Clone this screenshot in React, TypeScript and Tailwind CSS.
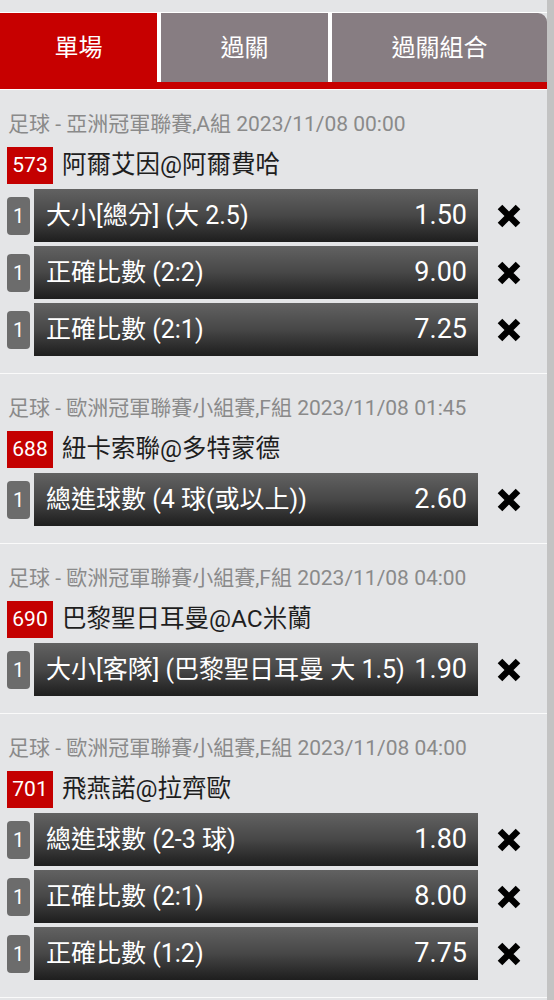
import React from "react";

type Bet = { label: string; odds: string };
type Match = { header: string; code: string; teams: string; bets: Bet[] };

const matches: Match[] = [
  {
    header: "足球 - 亞洲冠軍聯賽,A組 2023/11/08 00:00",
    code: "573",
    teams: "阿爾艾因@阿爾費哈",
    bets: [
      { label: "大小[總分] (大 2.5)", odds: "1.50" },
      { label: "正確比數 (2:2)", odds: "9.00" },
      { label: "正確比數 (2:1)", odds: "7.25" },
    ],
  },
  {
    header: "足球 - 歐洲冠軍聯賽小組賽,F組 2023/11/08 01:45",
    code: "688",
    teams: "紐卡索聯@多特蒙德",
    bets: [{ label: "總進球數 (4 球(或以上))", odds: "2.60" }],
  },
  {
    header: "足球 - 歐洲冠軍聯賽小組賽,F組 2023/11/08 04:00",
    code: "690",
    teams: "巴黎聖日耳曼@AC米蘭",
    bets: [{ label: "大小[客隊] (巴黎聖日耳曼 大 1.5)", odds: "1.90" }],
  },
  {
    header: "足球 - 歐洲冠軍聯賽小組賽,E組 2023/11/08 04:00",
    code: "701",
    teams: "飛燕諾@拉齊歐",
    bets: [
      { label: "總進球數 (2-3 球)", odds: "1.80" },
      { label: "正確比數 (2:1)", odds: "8.00" },
      { label: "正確比數 (1:2)", odds: "7.75" },
    ],
  },
];

const font = { fontFamily: 'Roboto, "Noto Sans CJK TC", sans-serif' };

function XIcon() {
  return (
    <svg width="26" height="24" viewBox="0 0 26 24">
      <path d="M4 3 L22 21 M22 3 L4 21" stroke="#000" strokeWidth="6.5" strokeLinecap="butt" />
    </svg>
  );
}

function BetRow({ bet }: { bet: Bet }) {
  return (
    <div className="flex items-center h-[53px]">
      <div className="w-[23px] h-[38px] rounded-[4px] bg-[#6c6c6c] text-white text-[20px] flex items-center justify-center shrink-0">
        1
      </div>
      <div className="ml-[4px] w-[444px] h-[53px] bg-linear-to-b from-[#626262] via-[#474747] to-[#1e1e1e] flex items-center justify-between pl-[12px] pr-[11px] text-white text-[25px] whitespace-nowrap">
        <span>{bet.label}</span>
        <span className="text-[27px]">{bet.odds}</span>
      </div>
      <div className="flex-1 flex items-center justify-center pr-[8px]">
        <XIcon />
      </div>
    </div>
  );
}

function Section({ m }: { m: Match }) {
  return (
    <div className="pl-[7px] pt-[25px] pb-[17px] border-b border-[#fafafa]">
      <div className="h-[20px] flex items-center text-[21px] text-[#8a8a8a] whitespace-nowrap pl-[1px]">
        {m.header}
      </div>
      <div className="mt-[12px] flex items-center h-[37px]">
        <div className="w-[46px] h-[37px] bg-[#c40000] text-white text-[21px] flex items-center justify-center">
          {m.code}
        </div>
        <div className="ml-[9px] text-[24.5px] text-[#1e1e1e] whitespace-nowrap">{m.teams}</div>
      </div>
      <div className="mt-[5px] flex flex-col gap-[4px]">
        {m.bets.map((b, i) => (
          <BetRow key={i} bet={b} />
        ))}
      </div>
    </div>
  );
}

export default function App() {
  return (
    <div className="w-[554px] h-[1000px] overflow-hidden bg-[#e4e5e7] flex" style={font}>
      <div className="w-[547px] flex flex-col">
        <div className="pt-[12px]">
          <div className="flex border-t border-white">
            <div className="w-[157px] h-[69px] bg-[#c70000] text-white text-[24px] flex items-center justify-center">
              單場
            </div>
            <div className="w-[4px] h-[69px] bg-white" />
            <div className="w-[167px] h-[69px] bg-[#877d82] text-white text-[24px] flex items-center justify-center">
              過關
            </div>
            <div className="w-[4px] h-[69px] bg-white" />
            <div className="flex-1 h-[69px] bg-[#877d82] rounded-tr-[9px] text-white text-[24px] flex items-center justify-center">
              過關組合
            </div>
          </div>
          <div className="h-[7px] bg-[#c70000]" />
          <div className="h-[1px] bg-white" />
        </div>
        {matches.map((m, i) => (
          <Section key={i} m={m} />
        ))}
      </div>
      <div className="w-[7px] h-full bg-[#c3c3c3]" />
    </div>
  );
}
